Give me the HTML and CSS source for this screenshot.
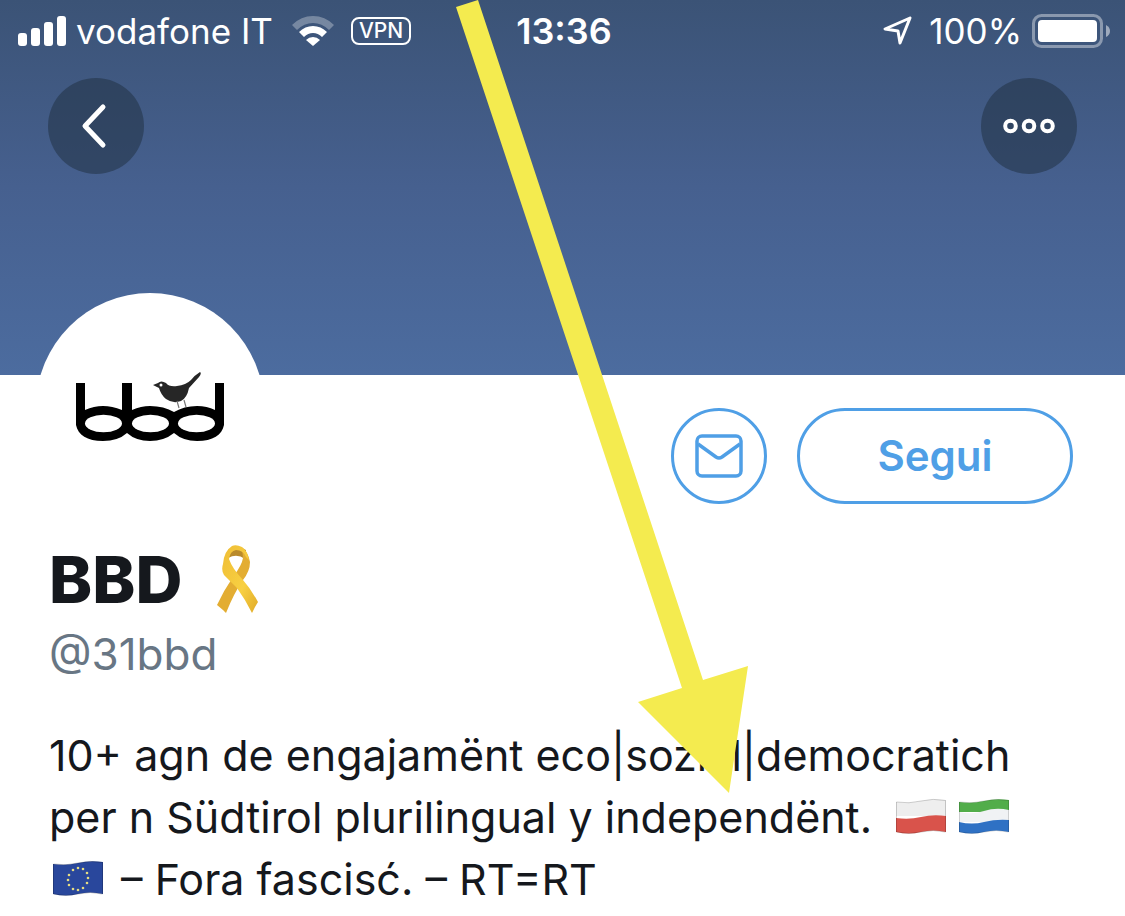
FILE: index.html
```html
<!DOCTYPE html>
<html lang="it">
<head>
  <meta charset="UTF-8">
  <meta name="viewport" content="width=device-width, initial-scale=1.0">
  <title>BBD (@31bbd)</title>
  <link rel="stylesheet" href="styles.css">
</head>
<body>

  <header class="banner">
    <div class="status-bar">
      <div class="status-left">
        <svg class="signal" width="48" height="30" viewBox="0 0 48 30" fill="#fff">
          <rect x="0" y="17" width="9" height="13" rx="3"/>
          <rect x="13" y="12" width="9" height="18" rx="3"/>
          <rect x="26" y="6" width="9" height="24" rx="3"/>
          <rect x="39" y="0" width="9" height="30" rx="3"/>
        </svg>
        <span class="carrier">vodafone IT</span>
        <svg class="wifi" width="42" height="30" viewBox="0 0 42 30" fill="#fff">
          <path opacity=".3" d="M0 9Q9 0 21 0T42 9L37 14Q30 7 21 7T5 14Z"/>
          <path d="M7 16Q13 10 21 10T35 16L30 21Q26 17 21 17T12 21Z"/>
          <path d="M14 24Q17 21 21 21T28 24L21 30Z"/>
        </svg>
        <span class="vpn">VPN</span>
      </div>
      <time class="clock">13:36</time>
      <div class="status-right">
        <svg class="location" width="30" height="30" viewBox="0 0 30 30" fill="none" stroke="#fff" stroke-width="3" stroke-linejoin="round">
          <path d="M27 2L2 13L15 15L17 27Z"/>
        </svg>
        <span>100%</span>
        <svg class="battery" width="78" height="34" viewBox="0 0 78 34">
          <rect x="1.5" y="1.5" width="68" height="31" rx="8" fill="none" stroke="#fff" stroke-opacity=".4" stroke-width="3"/>
          <rect x="6" y="6" width="59" height="22" rx="4" fill="#fff"/>
          <path d="M74 11Q78 13 78 17T74 23Z" fill="#fff" fill-opacity=".5"/>
        </svg>
      </div>
    </div>

    <nav class="nav">
      <button class="round-btn" aria-label="Indietro">
        <svg width="96" height="96" viewBox="0 0 96 96" fill="none" stroke="#fff" stroke-width="5" stroke-linecap="round" stroke-linejoin="round">
          <path d="M55 29L37 48L55 67"/>
        </svg>
      </button>
      <button class="round-btn" aria-label="Altro">
        <svg width="96" height="96" viewBox="0 0 96 96" fill="none" stroke="#fff" stroke-width="4">
          <circle cx="29.500" cy="48" r="5.300"/>
          <circle cx="48" cy="48" r="5.300"/>
          <circle cx="66.500" cy="48" r="5.300"/>
        </svg>
      </button>
    </nav>
  </header>

  <main class="profile">
    <div class="profile-top">
      <div class="avatar">
        <svg width="150" height="70" viewBox="0 0 150 70">
          <!-- letters -->
          <path d="M1 11H10V38Q19 34 28 34T47 38V11H57V38Q66 34 75 34Q89 34 99 40Q109 34 122 34Q132 34 140 38V11H149V53C147 63 138 69 122 69Q108 69 99 61Q89 69 75 69Q61 69 52 61Q43 69 28 69C12 69 3 63 1 53Z"/>
          <g fill="#fff">
            <ellipse cx="28.500" cy="51.500" rx="18.500" ry="8.700"/>
            <ellipse cx="75.500" cy="51.500" rx="18.500" ry="8.700"/>
            <ellipse cx="121.500" cy="51.500" rx="18.500" ry="8.700"/>
          </g>
          <!-- bird -->
          <path fill="#262626" d="M78 13L83 11Q86 8 91 11Q94 15 102 14Q111 13 116 8Q120 3 125 0Q127 1 124 5L114 16Q112 26 106 29Q98 32 91 27Q86 23 84 16Z"/>
          <circle cx="86" cy="13" r="1.500" fill="#fff"/>
          <path fill="none" stroke="#777" stroke-width="1.200" d="M102 29L104 36M109 28L111 35"/>
        </svg>
      </div>
      <div class="actions">
        <button class="mail-btn" aria-label="Messaggio">
          <svg width="48" height="44" viewBox="0 0 48 44" fill="none" stroke="#4f9fe6" stroke-width="3.500" stroke-linejoin="round">
            <rect x="2" y="2" width="44" height="40" rx="5"/>
            <path d="M3 10L21 23Q24 25 27 23L45 10"/>
          </svg>
        </button>
        <button class="follow-btn">Segui</button>
      </div>
    </div>

    <h1 class="name">
      BBD
      <svg class="ribbon" width="44" height="70" viewBox="0 0 44 70" role="img" aria-label="nastro">
        <defs>
          <linearGradient id="gold" x1="0" y1="0" x2="1" y2="1">
            <stop offset="0" stop-color="#efbd35"/>
            <stop offset=".6" stop-color="#f8d042"/>
            <stop offset="1" stop-color="#e0aa28"/>
          </linearGradient>
        </defs>
        <path fill="#b98a2b" d="M12 5Q20-1 30 5L29 14Q21 8 12 13Z"/>
        <path fill="#e3ad32" d="M25 2Q32 6 34 17Q34 26 27 35Q18 48 10 68L7 65L1 60Q8 45 17 32Q26 20 27 13Q27 7 25 2Z"/>
        <path fill="url(#gold)" d="M16 1Q8 6 7 19Q5 25 8 30L21 43Q29 54 36 68L39 62L42 57Q35 44 27 35Q16 23 13 14Q14 6 20 5Q27 5 30 12L33 15Q31 5 26 2Q20-1 16 1Z"/>
      </svg>
    </h1>
    <a class="handle" href="#">@31bbd</a>

    <p class="bio">
      10+ agn de engajamënt eco|sozial|democratich<br>
      per n Südtirol plurilingual y independënt.
      <span class="flags">
        <svg width="50" height="36" viewBox="0 0 50 36" role="img" aria-label="Polonia">
          <path fill="#eeeeee" d="M0 4Q13 6 25 3T50 2V18H0Z"/>
          <path fill="#d9534b" d="M0 20Q13 22 25 19T50 18V34Q37 31 25 34T0 34Z"/>
          <path fill="none" stroke="#000" stroke-opacity=".18" d="M.5 4Q13 6 25 3T49.500 2.500V34Q37 31 25 34T.5 34Z"/>
        </svg>
        <svg width="50" height="36" viewBox="0 0 50 36" role="img" aria-label="Sierra Leone">
          <path fill="#52ad4a" d="M0 4Q13 6 25 3T50 2V14H0Z"/>
          <path fill="#f0f2f4" d="M0 14Q13 17 25 13T50 12V24H0Z"/>
          <path fill="#2f71c4" d="M0 24Q13 27 25 24T50 22V34Q37 31 25 34T0 34Z"/>
          <path fill="none" stroke="#000" stroke-opacity=".15" d="M.5 4Q13 6 25 3T49.500 2.500V34Q37 31 25 34T.5 34Z"/>
        </svg>
      </span><br>
      <span class="flags flags-start">
        <svg width="50" height="36" viewBox="0 0 50 36" role="img" aria-label="Unione Europea">
          <path fill="#29479c" d="M0 4Q13 6 25 3T50 2V34Q37 31 25 34T0 34Z"/>
          <path fill="none" stroke="#000" stroke-opacity=".2" d="M.5 4Q13 6 25 3T49.500 2.500V34Q37 31 25 34T.5 34Z"/>
          <g fill="#e5dc83">
            <circle cx="25" cy="8" r="1.300"/><circle cx="30" cy="9" r="1.300"/>
            <circle cx="34" cy="13" r="1.300"/><circle cx="35" cy="18" r="1.300"/>
            <circle cx="34" cy="23" r="1.300"/><circle cx="30" cy="28" r="1.300"/>
            <circle cx="25" cy="30" r="1.300"/><circle cx="20" cy="29" r="1.300"/>
            <circle cx="16" cy="25" r="1.300"/><circle cx="15" cy="20" r="1.300"/>
            <circle cx="16" cy="15" r="1.300"/><circle cx="20" cy="10" r="1.300"/>
          </g>
        </svg>
      </span>
      – Fora fascisć. – RT=RT
    </p>
  </main>

  <svg class="arrow" width="1125" height="916" viewBox="0 0 1125 916" aria-hidden="true">
    <path fill="#f4eb4f" d="M456 7L478 0L703 680L748 666L729 793L638 702L682 688Z"/>
  </svg>

</body>
</html>
```
FILE: styles.css
```css
body {
  margin: 0;
  background: #ffffff;
  color: #15181d;
  font-family: Inter, "Liberation Sans", sans-serif;
  position: relative;
  overflow-x: hidden;
}
button {
  font-family: inherit;
  padding: 0;
  cursor: pointer;
}
svg {
  flex-shrink: 0;
}

/* banner */
.banner {
  height: 375px;
  background: linear-gradient(#3b5376, #46608f 50%, #4c6c9f);
  color: #ffffff;
}
.status-bar {
  display: grid;
  grid-template-columns: 1fr auto 1fr;
  align-items: center;
  height: 62px;
  padding: 0 15px 0 18px;
  font-size: 35px;
}
.status-left,
.status-right {
  display: flex;
  align-items: center;
}
.status-right {
  justify-content: flex-end;
  gap: 10px;
}
.carrier {
  margin: 0 19px 0 10px;
}
.vpn {
  margin-left: 17px;
  padding: 0 6px;
  border: 2px solid #ffffff;
  border-radius: 8px;
  font-size: 21px;
  font-weight: 500;
  line-height: 24px;
}
.location {
  margin-right: 6px;
}
.clock {
  font-size: 36px;
  font-weight: 600;
}
.nav {
  display: flex;
  justify-content: space-between;
  padding: 16px 48px 0;
}
.round-btn {
  width: 96px;
  height: 96px;
  border: none;
  border-radius: 50%;
  background: rgba(29, 45, 62, 0.5);
}
.round-btn svg {
  display: block;
}

/* profile */
.profile {
  padding: 0 52px 0 49px;
}
.profile-top {
  display: flex;
  justify-content: space-between;
  align-items: flex-start;
}
.avatar {
  display: flex;
  justify-content: center;
  align-items: center;
  width: 228px;
  height: 228px;
  margin: -82px 0 0 -13px;
  border-radius: 50%;
  background: #ffffff;
}
.actions {
  display: flex;
  gap: 30px;
  padding-top: 33px;
}
.mail-btn,
.follow-btn {
  box-sizing: border-box;
  height: 96px;
  border: 3px solid #4f9fe6;
  border-radius: 48px;
  background: #ffffff;
  color: #4f9fe6;
}
.mail-btn {
  display: flex;
  justify-content: center;
  align-items: center;
  width: 96px;
}
.follow-btn {
  width: 276px;
  padding-bottom: 2px;
  font-size: 42px;
  font-weight: 600;
}
.name {
  display: flex;
  align-items: center;
  gap: 34px;
  margin: 20px 0 0;
  font-size: 65px;
  font-weight: 800;
  line-height: 78px;
}
.handle {
  display: block;
  margin-top: 7px;
  color: #687684;
  font-size: 44px;
  line-height: 56px;
  text-decoration: none;
}
.bio {
  margin: 42px 0 0;
  font-size: 43px;
  line-height: 62px;
}
.flags {
  display: inline-flex;
  gap: 13px;
  margin-left: 12px;
  vertical-align: -1px;
}
.flags-start {
  margin: 0 6px 0 4px;
}

/* arrow lying over the whole page */
.arrow {
  position: absolute;
  top: 0;
  left: 0;
  pointer-events: none;
}
```
